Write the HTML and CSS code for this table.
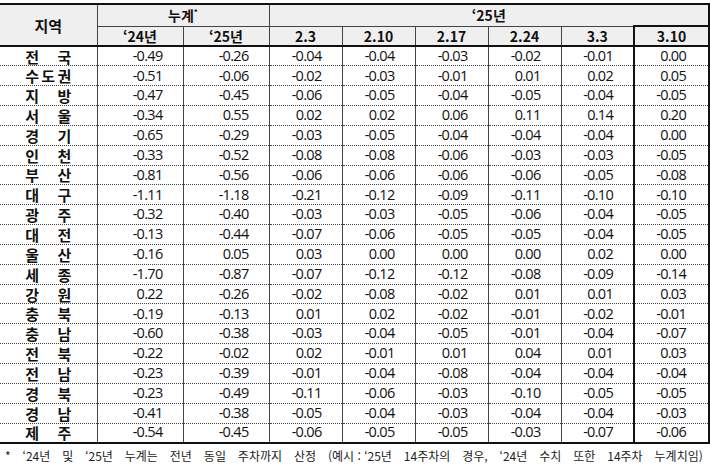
FILE: index.html
```html
<!DOCTYPE html>
<html lang="ko">
<head>
<meta charset="utf-8">
<link rel="stylesheet" href="styles.css">
</head>
<body>
<table class="tbl">
  <colgroup>
    <col class="c-region"><col class="c-cum"><col class="c-cum"><col class="c-wk"><col class="c-wk"><col class="c-wk"><col class="c-wk"><col class="c-wk"><col class="c-last">
  </colgroup>
  <thead>
    <tr class="h1">
      <th rowspan="2" class="region-h">지역</th>
      <th colspan="2" class="sep-r">누계<sup>*</sup></th>
      <th colspan="6" class="right-edge">‘25년</th>
    </tr>
    <tr class="h2">
      <th class="sep-l">‘24년</th>
      <th class="sep-r">‘25년</th>
      <th>2.3</th>
      <th>2.10</th>
      <th>2.17</th>
      <th>2.24</th>
      <th class="hi-l">3.3</th>
      <th class="hi hi-top">3.10</th>
    </tr>
  </thead>
  <tbody id="body"></tbody>
</table>
<p class="note"><span>*</span><span>‘24년</span><span>및</span><span>‘25년</span><span>누계는</span><span>전년</span><span>동일</span><span>주차까지</span><span>산정</span><span>(예시 : ‘25년</span><span>14주차의</span><span>경우,</span><span>‘24년</span><span>수치</span><span>또한</span><span>14주차</span><span>누계치임)</span></p>
<script src="app.js"></script>
</body>
</html>
```

FILE: styles.css
```css
* { box-sizing: border-box; }
html, body { margin: 0; padding: 0; background: #fff; }
body {
  width: 710px;
  height: 469px;
  overflow: hidden;
  font-family: "Open Sans", "Noto Sans CJK KR", sans-serif;
  color: #111;
}
.tbl {
  margin-top: 3px;
  width: 708px;
  border-collapse: collapse;
  table-layout: fixed;
}
.c-region { width: 97px; }
.c-cum { width: 86px; }
.c-wk { width: 73px; }
.c-last { width: 75px; }

.tbl th {
  background: #efefef;
  font-family: "Noto Sans CJK KR", sans-serif;
  font-weight: 700;
  font-size: 14px;
  padding: 0;
  text-align: center;
  line-height: 1;
  border-left: 1px solid #444;
}
.h1 th { height: 22px; border-top: 2px solid #111; border-bottom: 1px solid #444; }
.h2 th { height: 20px; border-bottom: 2px solid #111; }
.tbl th.region-h { border-left: none; font-size: 15px; border-bottom: 2px solid #111; }
.tbl th.right-edge, .tbl th.hi { border-right: 2px solid #111; }
.tbl th.hi { border-left: 2px solid #111; border-top: 2px solid #111; }
.tbl sup { font-size: 8px; vertical-align: 6px; }

.tbl td {
  height: 19.85px;
  padding: 0 20px 0 0;
  text-align: right;
  font-size: 14.5px;
  line-height: 1;
  letter-spacing: -0.7px;
  border-left: 1px solid #444;
  border-bottom: 1px dotted #444;
  white-space: nowrap;
}
.tbl td.name {
  border-left: none;
  padding: 0;
  text-align: left;
  letter-spacing: 0;
}
.tbl td.last {
  border-left: 2px solid #111;
  border-right: 2px solid #111;
  padding-right: 22px;
}
.tbl tbody tr:last-child td { border-bottom: 2px solid #111; }
.nm {
  display: flex;
  justify-content: space-between;
  width: 46px;
  margin: 0 auto;
  font-family: "Noto Sans CJK KR", sans-serif;
  font-weight: 700;
  font-size: 15px;
}
.note {
  margin: 6px 0 0 5px;
  width: 698px;
  display: flex;
  justify-content: space-between;
  font-family: "Noto Sans CJK KR", sans-serif;
  font-size: 12px;
  color: #222;
  line-height: 1;
}
```

FILE: app.js
```js
var rows = [
 ["전국","-0.49","-0.26","-0.04","-0.04","-0.03","-0.02","-0.01","0.00"],
 ["수도권","-0.51","-0.06","-0.02","-0.03","-0.01","0.01","0.02","0.05"],
 ["지방","-0.47","-0.45","-0.06","-0.05","-0.04","-0.05","-0.04","-0.05"],
 ["서울","-0.34","0.55","0.02","0.02","0.06","0.11","0.14","0.20"],
 ["경기","-0.65","-0.29","-0.03","-0.05","-0.04","-0.04","-0.04","0.00"],
 ["인천","-0.33","-0.52","-0.08","-0.08","-0.06","-0.03","-0.03","-0.05"],
 ["부산","-0.81","-0.56","-0.06","-0.06","-0.06","-0.06","-0.05","-0.08"],
 ["대구","-1.11","-1.18","-0.21","-0.12","-0.09","-0.11","-0.10","-0.10"],
 ["광주","-0.32","-0.40","-0.03","-0.03","-0.05","-0.06","-0.04","-0.05"],
 ["대전","-0.13","-0.44","-0.07","-0.06","-0.05","-0.05","-0.04","-0.05"],
 ["울산","-0.16","0.05","0.03","0.00","0.00","0.00","0.02","0.00"],
 ["세종","-1.70","-0.87","-0.07","-0.12","-0.12","-0.08","-0.09","-0.14"],
 ["강원","0.22","-0.26","-0.02","-0.08","-0.02","0.01","0.01","0.03"],
 ["충북","-0.19","-0.13","0.01","0.02","-0.02","-0.01","-0.02","-0.01"],
 ["충남","-0.60","-0.38","-0.03","-0.04","-0.05","-0.01","-0.04","-0.07"],
 ["전북","-0.22","-0.02","0.02","-0.01","0.01","0.04","0.01","0.03"],
 ["전남","-0.23","-0.39","-0.01","-0.04","-0.08","-0.04","-0.04","-0.04"],
 ["경북","-0.23","-0.49","-0.11","-0.06","-0.03","-0.10","-0.05","-0.05"],
 ["경남","-0.41","-0.38","-0.05","-0.04","-0.03","-0.04","-0.04","-0.03"],
 ["제주","-0.54","-0.45","-0.06","-0.05","-0.05","-0.03","-0.07","-0.06"]
];
var body = document.getElementById("body");
rows.forEach(function (r) {
  var tr = document.createElement("tr");
  var name = document.createElement("td");
  name.className = "name";
  var nm = document.createElement("div");
  nm.className = "nm";
  Array.from(r[0]).forEach(function (ch) {
    var s = document.createElement("span");
    s.textContent = ch;
    nm.appendChild(s);
  });
  name.appendChild(nm);
  tr.appendChild(name);
  for (var i = 1; i < r.length; i++) {
    var td = document.createElement("td");
    td.textContent = r[i];
    if (i === r.length - 1) td.className = "last";
    tr.appendChild(td);
  }
  body.appendChild(tr);
});
```
